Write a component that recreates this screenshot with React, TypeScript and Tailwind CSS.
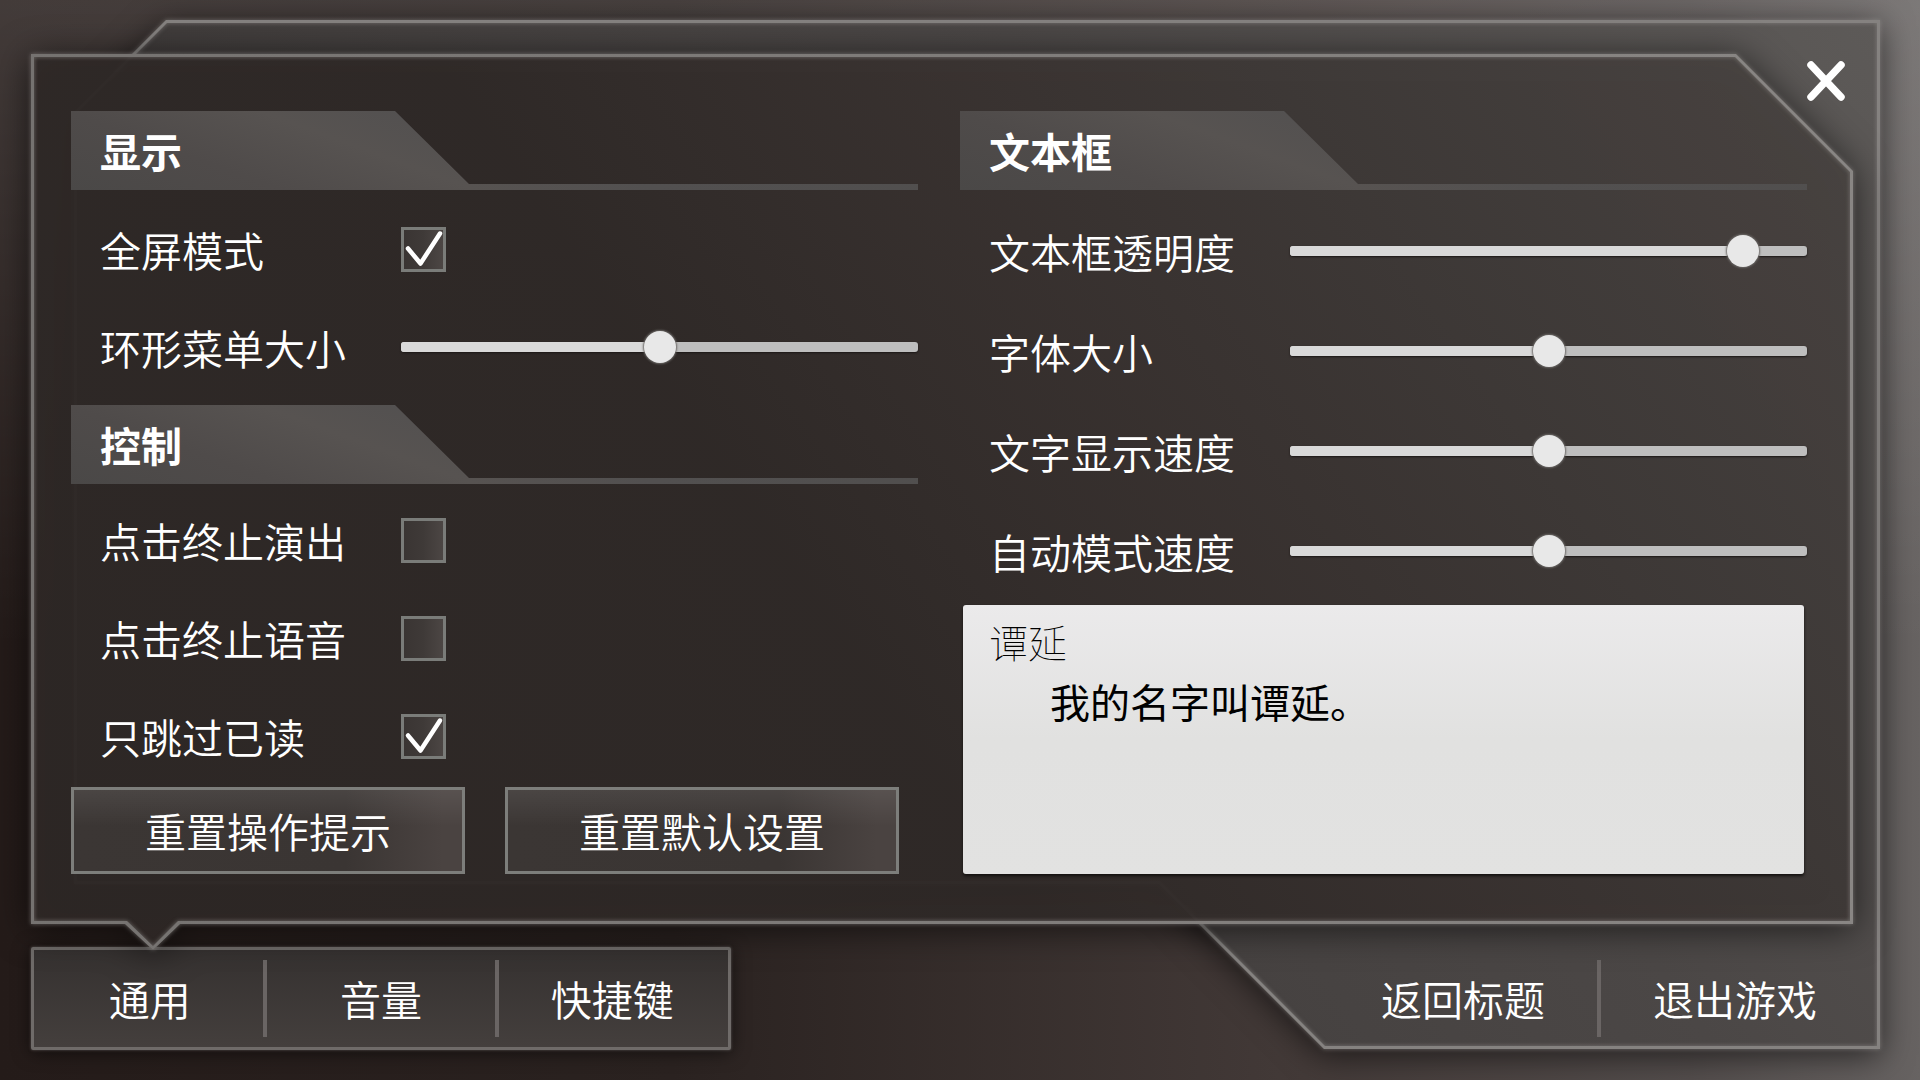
import { useState, type ReactNode } from "react";
import { clsx } from "clsx";

const FONT = "font-['Noto_Sans_CJK_SC','Noto_Sans',sans-serif]";

function SectionTitle({ children }: { children: ReactNode }) {
  return (
    <h2 className="h-[79px] pl-[29px] flex items-center text-[41px] leading-none font-bold text-white bg-[linear-gradient(20deg,#4a4847_0%,#4f4b4a_20%,#575351_38%,#525050_55%,#504e4d_100%)] [clip-path:polygon(0_0,324px_0,398px_73px,100%_73px,100%_100%,0_100%)]">
      {children}
    </h2>
  );
}

function Row({ id, label, tall, children }: { id: string; label: string; tall?: boolean; children: ReactNode }) {
  return (
    <div className={clsx("grid grid-cols-[330px_1fr] items-center", tall ? "h-[100px]" : "h-[98px]")}>
      <label htmlFor={id} className="pl-[29px] text-[41px] leading-none text-white whitespace-nowrap">
        {label}
      </label>
      {children}
    </div>
  );
}

function SliderRow({ id, label, initial = 50, tall }: { id: string; label: string; initial?: number; tall?: boolean }) {
  const [value, setValue] = useState(initial);
  return (
    <Row id={id} label={label} tall={tall}>
      <div className="relative h-8 flex items-center">
        <div className="absolute inset-x-0 h-[10px] rounded-[3px] overflow-hidden bg-[#bebebe] shadow-[0_1px_2px_#1c1817]">
          <div className="h-full bg-[#d9d9d9]" style={{ width: `${value}%` }} />
        </div>
        <input
          id={id}
          type="range"
          min={0}
          max={100}
          value={value}
          onChange={(e) => setValue(Number(e.target.value))}
          className="relative m-0 h-8 w-full appearance-none bg-transparent cursor-pointer [&::-webkit-slider-thumb]:appearance-none [&::-webkit-slider-thumb]:size-8 [&::-webkit-slider-thumb]:rounded-full [&::-webkit-slider-thumb]:bg-[#e8e8e8] [&::-webkit-slider-thumb]:shadow-[0_0_2px_1px_#6b6866]"
        />
      </div>
    </Row>
  );
}

function CheckRow({ id, label, initial = false }: { id: string; label: string; initial?: boolean }) {
  const [checked, setChecked] = useState(initial);
  return (
    <Row id={id} label={label}>
      <div className="grid size-[45px] place-items-center">
        <input
          id={id}
          type="checkbox"
          checked={checked}
          onChange={(e) => setChecked(e.target.checked)}
          className="col-start-1 row-start-1 size-[45px] appearance-none border-[3px] border-[#7a7c79] bg-linear-to-r from-[#3a3533] via-[#3f3a38] to-[#4c4644] cursor-pointer"
        />
        {checked && (
          <svg viewBox="0 0 45 45" className="col-start-1 row-start-1 size-[45px] pointer-events-none" fill="none" stroke="#fff" strokeWidth="4.5" strokeLinecap="round" strokeLinejoin="round">
            <path d="M7 21.5 L19.5 36.5 L39 6.5" />
          </svg>
        )}
      </div>
    </Row>
  );
}

function ResetButton({ children }: { children: ReactNode }) {
  return (
    <button
      type="button"
      className="h-[87px] w-[394px] border-[3px] border-[#7d7e7b] text-[41px] leading-none text-white bg-[linear-gradient(180deg,#ffffff14,#ffffff00_45%),linear-gradient(90deg,#3b3634_0%,#3a3533_70%,#4a4341_95%)]"
    >
      {children}
    </button>
  );
}

function BarButton({ active, wide, children }: { active?: boolean; wide?: boolean; children: ReactNode }) {
  return (
    <button type="button" aria-pressed={active} className={clsx("h-full text-[41px] leading-none text-white", wide ? "w-[272px]" : "flex-1")}>
      {children}
    </button>
  );
}

function Divider() {
  return <span aria-hidden="true" className="w-1 h-[77px] -mx-0.5 bg-[#6a6564]" />;
}

// The angled plate behind everything: top left and bottom left corners are cut away.
function BackPlate() {
  return (
    <div aria-hidden="true" className="absolute left-[74px] right-10 top-5 bottom-[31px] drop-shadow-[0_6px_16px_#0009]">
      <div className="absolute inset-0 bg-[linear-gradient(55deg,#353130_0%,#423e3d_35%,#4b4746_65%,#5d5a58_100%)] [clip-path:polygon(92px_0,100%_0,100%_100%,calc(100%_-_556px)_100%,calc(100%_-_721px)_calc(100%_-_165px),0_calc(100%_-_165px),0_92px)]" />
      <div className="absolute inset-0 drop-shadow-[0_0_2px_#a09c99a0]">
        <div className="h-full bg-[#858280] [clip-path:polygon(evenodd,92px_0,100%_0,100%_100%,calc(100%_-_556px)_100%,calc(100%_-_721px)_calc(100%_-_165px),0_calc(100%_-_165px),0_92px,92px_0,93px_3px,3px_93px,3px_calc(100%_-_168px),calc(100%_-_720px)_calc(100%_-_168px),calc(100%_-_555px)_calc(100%_-_3px),calc(100%_-_3px)_calc(100%_-_3px),calc(100%_-_3px)_3px,93px_3px)]" />
      </div>
    </div>
  );
}

// Settings panel outline, with the pointer towards the active tab in its lower edge.
function PanelFrame() {
  return (
    <div aria-hidden="true" className="absolute inset-x-0 top-0 -bottom-[26px] drop-shadow-[0_4px_18px_#000a]">
      <div className="absolute inset-0 bg-[linear-gradient(55deg,#2e2826_0%,#302a28_42%,#393230_60%,#403b39_78%,#4a4543_100%)] opacity-95 [clip-path:polygon(0_0,calc(100%_-_117px)_0,100%_117px,100%_calc(100%_-_26px),149px_calc(100%_-_26px),122px_100%,94px_calc(100%_-_26px),0_calc(100%_-_26px))]" />
      <div className="absolute inset-0 drop-shadow-[0_0_2px_#a09c99a0]">
        <div className="h-full bg-linear-to-r from-[#757270] to-[#898684] [clip-path:polygon(evenodd,0_0,calc(100%_-_117px)_0,100%_117px,100%_calc(100%_-_26px),149px_calc(100%_-_26px),122px_100%,94px_calc(100%_-_26px),0_calc(100%_-_26px),0_0,3px_3px,3px_calc(100%_-_29px),96px_calc(100%_-_29px),122px_calc(100%_-_4px),147px_calc(100%_-_29px),calc(100%_-_3px)_calc(100%_-_29px),calc(100%_-_3px)_118px,calc(100%_-_118px)_3px,3px_3px)]" />
      </div>
    </div>
  );
}

export default function App() {
  return (
    <div
      lang="zh-CN"
      className={clsx(
        "relative isolate flex min-h-screen flex-col pt-[54px] pb-[30px] font-[350]",
        "bg-[linear-gradient(0deg,#ffffff00_40%,#ffffff24_100%),linear-gradient(90deg,#241b19_0%,#2a2220_35%,#433a38_68%,#534d4c_88%,#676362_100%)]",
        FONT
      )}
    >
      <BackPlate />

      <button type="button" aria-label="关闭" className="absolute right-[75px] top-[61px] z-10">
        <svg viewBox="0 0 38 40" className="w-[38px] h-10" fill="none" stroke="#fff" strokeWidth="7.5" strokeLinecap="round">
          <path d="M4 4 L34 36 M34 4 L4 36" />
        </svg>
      </button>

      <main className="relative z-[1] ml-[31px] mr-[67px] flex-1 pl-10 pr-[46px] pt-[57px] pb-12">
        <PanelFrame />
        <div className="relative grid h-full grid-cols-2 gap-x-[42px]">
          <div className="flex flex-col">
            <section>
              <SectionTitle>显示</SectionTitle>
              <div className="pt-[10px] pb-[9px]">
                <CheckRow id="fullscreen" label="全屏模式" initial />
                <SliderRow id="ring-size" label="环形菜单大小" />
              </div>
            </section>
            <section>
              <SectionTitle>控制</SectionTitle>
              <div className="pt-[7px] pb-0.5">
                <CheckRow id="stop-show" label="点击终止演出" />
                <CheckRow id="stop-voice" label="点击终止语音" />
                <CheckRow id="skip-read" label="只跳过已读" initial />
              </div>
            </section>
            <div className="flex gap-10">
              <ResetButton>重置操作提示</ResetButton>
              <ResetButton>重置默认设置</ResetButton>
            </div>
          </div>

          <section className="flex flex-col">
            <SectionTitle>文本框</SectionTitle>
            <div className="pt-[11px] pb-1">
              <SliderRow tall id="box-opacity" label="文本框透明度" initial={90} />
              <SliderRow tall id="font-size" label="字体大小" />
              <SliderRow tall id="text-speed" label="文字显示速度" />
              <SliderRow tall id="auto-speed" label="自动模式速度" />
            </div>
            <div className="mx-[3px] flex-1 rounded-[3px] bg-linear-to-b from-[#ebeaeb] via-[#e1e1e0] to-[#e2e2e1] pl-[26px] pt-4 text-black shadow-[0_2px_3px_#141110]">
              <p className="text-[39px] leading-10 font-thin">谭延</p>
              <p className="pl-[61px] pt-5 text-[40px] leading-10 font-normal">我的名字叫谭延。</p>
            </div>
          </section>
        </div>
      </main>

      <footer className="relative mt-[23px] ml-[31px] mr-[49px] flex justify-between">
        <nav className="flex h-[103px] w-[700px] items-center rounded-xs border-[3px] border-[#6f6b69] bg-linear-to-b from-[#353130] to-[#443f3d] shadow-[0_0_3px_#a09c9980,0_2px_18px_#0009]">
          <BarButton active>通用</BarButton>
          <Divider />
          <BarButton>音量</BarButton>
          <Divider />
          <BarButton>快捷键</BarButton>
        </nav>
        <div className="flex h-[103px] items-center">
          <BarButton wide>返回标题</BarButton>
          <Divider />
          <BarButton wide>退出游戏</BarButton>
        </div>
      </footer>
    </div>
  );
}
